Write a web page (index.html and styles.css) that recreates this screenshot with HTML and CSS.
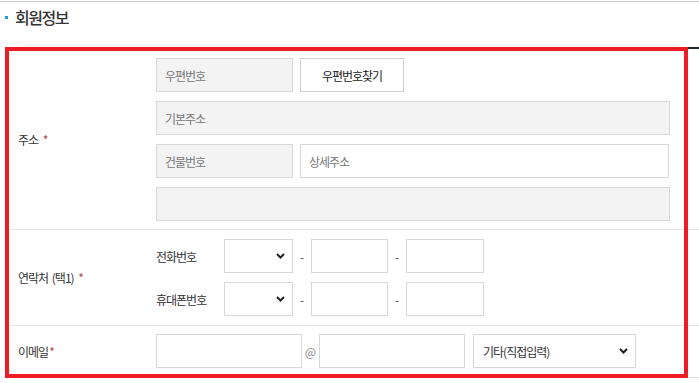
FILE: index.html
```html
<!DOCTYPE html>
<html>
    <head>
        <meta charset="utf-8" />
        <meta name="viewport" content="width=device-width, initial-scale=1" />
        <title>회원정보</title>
        <link rel="stylesheet" href="styles.css">
    </head>
    <body>
        <div class="page">
            <h3 class="section-title">회원정보</h3>
            <div class="member-form">
                <div class="form-row">
                    <div class="form-row__label"><span>주소 <span class="req">*</span></span></div>
                    <div class="form-row__fields fields-address">
                        <div class="line">
                            <input class="field field--gray w-137" placeholder="우편번호" readonly>
                            <button class="btn-zip" type="button">우편번호찾기</button>
                        </div>
                        <div class="line">
                            <input class="field field--gray w-514" placeholder="기본주소" readonly>
                        </div>
                        <div class="line">
                            <input class="field field--gray w-137" placeholder="건물번호" readonly>
                            <input class="field w-369" placeholder="상세주소">
                        </div>
                        <div class="line">
                            <input class="field field--gray w-514" readonly>
                        </div>
                    </div>
                </div>
                <div class="form-row">
                    <div class="form-row__label"><span>연락처 (택1) <span class="req">*</span></span></div>
                    <div class="form-row__fields fields-phone">
                        <div class="line">
                            <span class="sub-label">전화번호</span>
                            <div class="select w-69">
                                <span></span>
                                <svg width="9" height="6" viewBox="0 0 9 6"><path d="M1 1l3.5 3.5L8 1" fill="none" stroke="#222" stroke-width="2"/></svg>
                            </div>
                            <span class="sep">-</span>
                            <input class="field w-77">
                            <span class="sep">-</span>
                            <input class="field w-78">
                        </div>
                        <div class="line">
                            <span class="sub-label">휴대폰번호</span>
                            <div class="select w-69">
                                <span></span>
                                <svg width="9" height="6" viewBox="0 0 9 6"><path d="M1 1l3.5 3.5L8 1" fill="none" stroke="#222" stroke-width="2"/></svg>
                            </div>
                            <span class="sep">-</span>
                            <input class="field w-77">
                            <span class="sep">-</span>
                            <input class="field w-78">
                        </div>
                    </div>
                </div>
                <div class="form-row">
                    <div class="form-row__label"><span>이메일<span class="req">*</span></span></div>
                    <div class="form-row__fields fields-email">
                        <div class="line">
                            <input class="field w-146">
                            <span class="at">@</span>
                            <input class="field w-146">
                            <div class="select w-163 select--email">
                                <span>기타(직접입력)</span>
                                <svg width="9" height="6" viewBox="0 0 9 6"><path d="M1 1l3.5 3.5L8 1" fill="none" stroke="#222" stroke-width="2"/></svg>
                            </div>
                        </div>
                    </div>
                </div>
            </div>
            <!-- red mark drawn over the form -->
            <div class="highlight"></div>
        </div>
    </body>
</html>
```

FILE: styles.css
```css
*,*::before,*::after{
    box-sizing: border-box;
}
body{
    margin:0;
    padding-top:1px;
    font-family:"Noto Sans CJK KR", "Noto Sans", sans-serif;
    color:#333;
    background:#fff;
}
.page{
    position: relative;
    border-top:1px solid #cfcfcf;
}
.section-title{
    display:flex;
    align-items:center;
    gap:7px;
    margin:0 0 18px;
    padding:3px 0 0 5px;
    font-size:16px;
    line-height:24px;
    font-weight:500;
    letter-spacing:-1.5px;
    color:#333;
}
.section-title::before{
    content:"";
    width:3px;
    height:3px;
    background:#1e9fdc;
}

.member-form{
    margin-left:5px;
    border-top:2px solid #1d2533;
    border-bottom:1px solid #dcdcdc;
}
.form-row{
    display:grid;
    grid-template-columns:151px 1fr;
}
.form-row + .form-row{
    border-top:1px solid #e8e8e8;
}
.form-row__label{
    display:flex;
    align-items:center;
    padding-left:13px;
    font-size:12px;
    letter-spacing:-1px;
    word-spacing:2px;
    color:#333;
}
.req{
    color:#b04a3c;
    margin-left:1px;
}
.form-row__fields{
    display:flex;
    flex-direction:column;
    gap:9px;
}
.fields-address{
    padding:9px 0 8px;
}
.fields-phone{
    padding:9px 0;
}
.fields-email{
    padding:8px 0 9px;
}
.line{
    display:flex;
    align-items:center;
    gap:7px;
}
.fields-phone .line,
.fields-email .line{
    gap:0;
}

.field{
    height:34px;
    margin:0;
    padding:0 8px;
    border:1px solid #d8d8d8;
    background:#fff;
    font-family:inherit;
    font-size:12px;
    letter-spacing:-1px;
    color:#333;
    outline:none;
}
.field::placeholder{
    color:#777;
}
.field--gray{
    background:#f3f3f3;
}
.btn-zip{
    width:104px;
    height:34px;
    margin:0;
    padding:0;
    border:1px solid #d0d0d0;
    background:#fff;
    font-family:inherit;
    font-size:12px;
    font-weight:400;
    letter-spacing:-1px;
    color:#1a1a1a;
}

.sub-label{
    width:68px;
    font-size:12px;
    letter-spacing:-1px;
    color:#333;
}
.sep{
    width:18px;
    text-align:center;
    font-size:12px;
    color:#555;
}
.at{
    width:17px;
    text-align:center;
    font-size:12px;
    color:#888;
}
.select{
    display:flex;
    align-items:center;
    justify-content:space-between;
    height:34px;
    padding:0 7px 0 9px;
    border:1px solid #d8d8d8;
    background:#fff;
    font-size:12px;
    letter-spacing:-1px;
    color:#333;
}
.select--email{
    margin-left:8px;
}

.w-69{ width:69px; }
.w-77{ width:77px; }
.w-78{ width:78px; }
.w-137{ width:137px; }
.w-146{ width:146px; }
.w-163{ width:163px; }
.w-369{ width:369px; }
.w-514{ width:514px; }

.highlight{
    position:absolute;
    left:5px;
    top:45px;
    width:683px;
    height:331px;
    border:4px solid #ed1c24;
    pointer-events:none;
}
```
